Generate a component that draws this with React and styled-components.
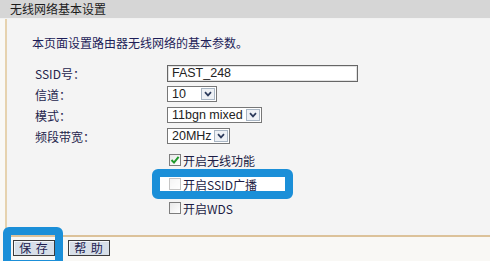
import styled, { createGlobalStyle } from "styled-components";

const GlobalStyle = createGlobalStyle`
    html, body {
        margin: 0;
        padding: 0;
        background: #f9f8f5;
        overflow: hidden;
    }
    body {
        font-family: "Noto Sans CJK SC", "Noto Sans", sans-serif;
        font-size: 12px;
        color: #1f1f48;
    }
`

const Page = styled.div`
    width: 490px;
    height: 261px;
    display: flex;
    flex-direction: column;
`

const Header = styled.div`
    height: 18px;
    line-height: 18px;
    padding-left: 10px;
    background: #d6d6d6;
    border-bottom: 1px solid #f2f2f2;
    color: #1c1c1c;
    font-size: 12px;
`

const Body = styled.div`
    margin-left: 5px;
    display: flex;
    flex-direction: column;
`

const Panel = styled.div`
    background: #f4f4f4;
    border-left: 2px solid #e6d2ae;
    border-bottom: 2px solid #dcc29a;
    padding: 16px 0 15px 0;
    display: flex;
    flex-direction: column;
`

const Intro = styled.div`
    padding-left: 25px;
    line-height: 16px;
    color: #1d1d58;
`

const Form = styled.div`
    margin: 11px 0 0 28px;
    display: grid;
    grid-template-columns: 132px auto;
    grid-auto-rows: 21px;
    align-items: center;
`

const Label = styled.div`
    color: #24244c;
    line-height: 16px;
    padding-top: 2px;
`

const TextInput = styled.input`
    box-sizing: border-box;
    width: 191px;
    height: 17px;
    padding: 0 4px;
    border: 1px solid #666;
    box-shadow: inset 0 0 0 1px #e2e2e2;
    background: #fff;
    font-family: "Liberation Sans", Arial, sans-serif;
    font-size: 12.5px;
    color: #222;
    outline: none;
`

const SelectBox = styled.div`
    box-sizing: border-box;
    width: ${({ width }) => width}px;
    height: 16px;
    border: 1px solid #777;
    background: #fff;
    display: flex;
    align-items: center;
    justify-content: space-between;
    font-family: "Liberation Sans", Arial, sans-serif;
    font-size: 12.5px;
    color: #222;
    padding-left: 4px;
`

const Arrow = styled.span`
    box-sizing: border-box;
    width: 14px;
    height: 12px;
    margin-right: 1px;
    border: 1px solid #a9b6c4;
    background: #eef1f5;
    display: flex;
    align-items: center;
    justify-content: center;
`

const CheckList = styled.div`
    margin: 2px 0 0 162px;
    display: flex;
    flex-direction: column;
`

const CheckRow = styled.div`
    height: 24px;
    display: flex;
    align-items: center;
`

const CheckItem = styled.span`
    display: inline-flex;
    align-items: center;
    gap: 2px;
    height: 16px;
    color: #1c1c44;
`

const Box = styled.span`
    box-sizing: border-box;
    width: 12px;
    height: 12px;
    border: 1px solid #7d7d7d;
    background: linear-gradient(135deg, #e8e8e8, #fff);
    display: inline-flex;
    align-items: center;
    justify-content: center;
    opacity: ${({ faint }) => (faint ? 0.45 : 1)};
`

const Highlight = styled.span`
    position: relative;
    display: inline-flex;
    isolation: isolate;
    &::before {
        content: "";
        position: absolute;
        top: ${({ t }) => t}px;
        right: ${({ r }) => r}px;
        bottom: ${({ b }) => b}px;
        left: ${({ l }) => l}px;
        border: 8px solid #1b8fd8;
        border-radius: 6px;
        background: ${({ fill }) => fill || "transparent"};
        z-index: -1;
    }
`

const Footer = styled.div`
    padding: 3px 0 0 8px;
    display: flex;
    gap: 13px;
`

const Button = styled.button`
    box-sizing: border-box;
    width: 42px;
    height: 16px;
    padding: 0;
    border: 1px solid #3b3b3b;
    box-shadow: inset 1px 1px 0 #f4f6f9;
    background: #d7dfe8;
    font-family: "Noto Sans CJK SC", sans-serif;
    font-size: 12px;
    line-height: 14px;
    color: #1d1d50;
    letter-spacing: 1px;
`

const Chevron = () => (
    <svg width="8" height="6" viewBox="0 0 8 6">
        <path d="M1 1.2 L4 4.4 L7 1.2" fill="none" stroke="#2c3b5c" strokeWidth="1.7" />
    </svg>
)

const Tick = () => (
    <svg width="10" height="10" viewBox="0 0 10 10">
        <path d="M1.5 5 L4 7.6 L8.6 1.8" fill="none" stroke="#1f9a2c" strokeWidth="2" />
    </svg>
)

const Select = ({ width, value }) => (
    <SelectBox width={width}>
        {value}
        <Arrow><Chevron /></Arrow>
    </SelectBox>
)

export default function App() {
    return (
        <Page>
            <GlobalStyle />
            <Header>无线网络基本设置</Header>
            <Body>
                <Panel>
                    <Intro>本页面设置路由器无线网络的基本参数。</Intro>
                    <Form>
                        <Label>SSID号：</Label>
                        <div><TextInput defaultValue="FAST_248" /></div>
                        <Label>信道：</Label>
                        <Select width={50} value="10" />
                        <Label>模式：</Label>
                        <Select width={95} value="11bgn mixed" />
                        <Label>频段带宽：</Label>
                        <Select width={63} value="20MHz" />
                    </Form>
                    <CheckList>
                        <CheckRow>
                            <CheckItem><Box><Tick /></Box>开启无线功能</CheckItem>
                        </CheckRow>
                        <CheckRow>
                            <Highlight t={-7} r={-36} b={-7} l={-17} fill="#fff">
                                <CheckItem><Box faint />开启SSID广播</CheckItem>
                            </Highlight>
                        </CheckRow>
                        <CheckRow>
                            <CheckItem><Box />开启WDS</CheckItem>
                        </CheckRow>
                    </CheckList>
                </Panel>
                <Footer>
                    <Highlight t={-13} r={-8} b={-12} l={-10}>
                        <Button>保 存</Button>
                    </Highlight>
                    <Button>帮 助</Button>
                </Footer>
            </Body>
        </Page>
    );
}
